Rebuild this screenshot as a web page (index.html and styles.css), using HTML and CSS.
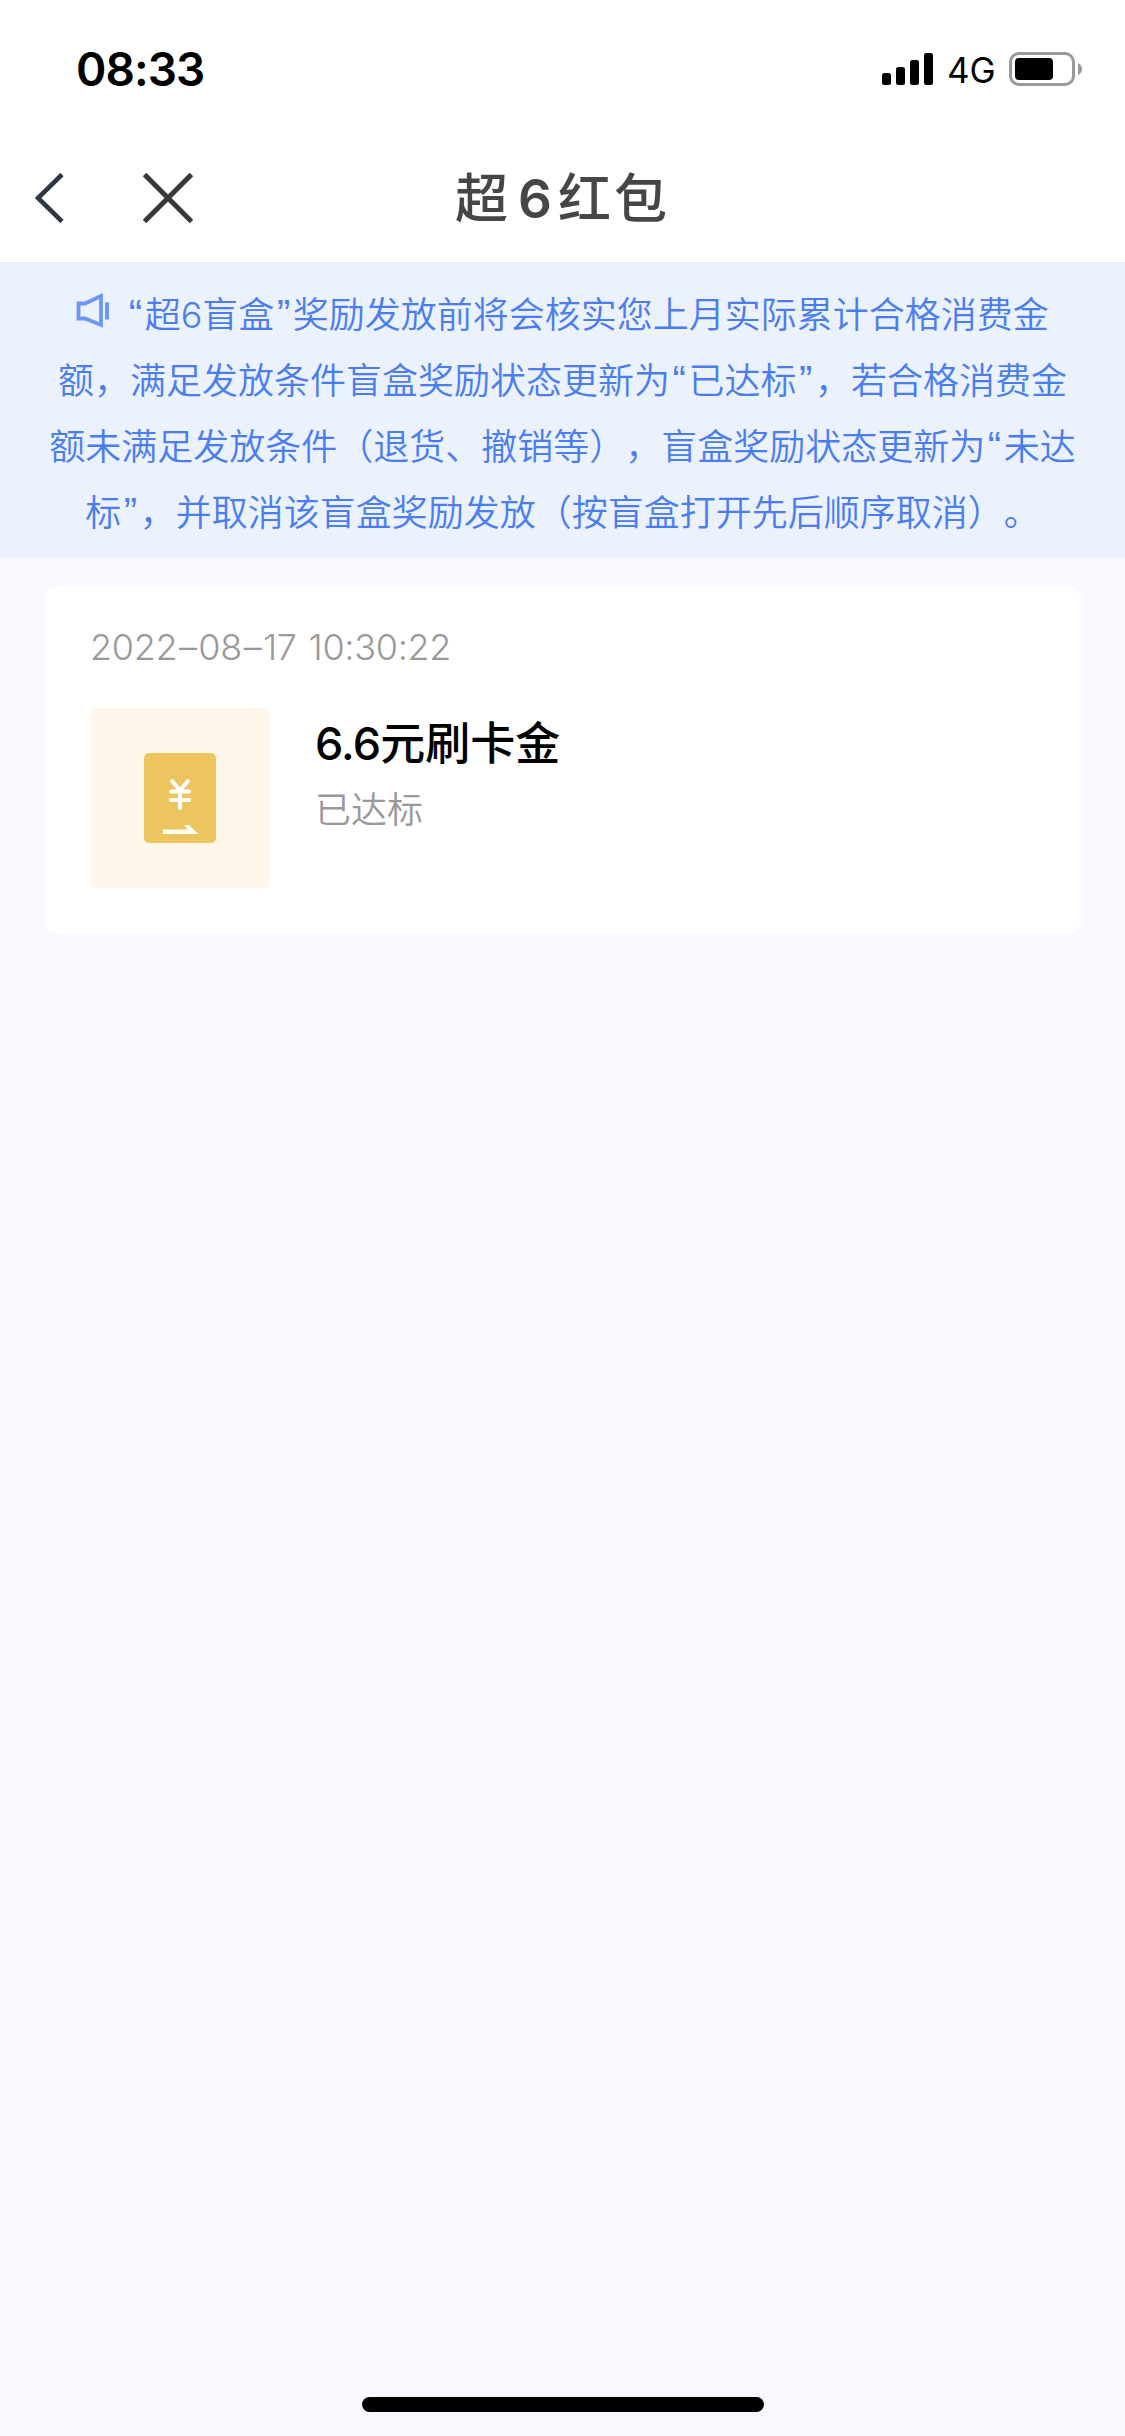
FILE: index.html
```html
<!DOCTYPE html>
<html lang="zh-CN">
<head>
<meta charset="utf-8">
<title>超6红包</title>
<link rel="stylesheet" href="styles.css">
</head>
<body>
<div class="screen">
  <header class="header">
    <div class="status">
      <span class="time">08:33</span>
      <div class="indicators">
        <svg class="signal" width="51" height="32" viewBox="0 0 51 32"><rect x="0" y="20" width="9" height="12" rx="2.5"/><rect x="14" y="14" width="9" height="18" rx="2.5"/><rect x="28" y="7" width="9" height="25" rx="2.5"/><rect x="42" y="0" width="9" height="32" rx="2.5"/></svg>
        <span class="network">4G</span>
        <svg class="battery" width="73" height="34" viewBox="0 0 73 34"><rect x="1.5" y="1.5" width="63" height="31" rx="8.5" fill="none" stroke="#999" stroke-width="3"/><rect x="6" y="6" width="38" height="22" rx="4"/><path d="M69 11q4 2 4 6t-4 6z" fill="#999"/></svg>
      </div>
    </div>
    <nav class="nav">
      <div class="nav-actions">
        <svg class="back" width="30" height="50" viewBox="0 0 30 50"><path d="M27 1.500L3 25L27 48.500" fill="none" stroke="#2f3744" stroke-width="4.600"/></svg>
        <svg class="close" width="50" height="50" viewBox="0 0 50 50"><path d="M1.500 1.500L48.500 48.500M48.500 1.500L1.500 48.500" fill="none" stroke="#383838" stroke-width="5"/></svg>
      </div>
      <h1 class="nav-title">超<span class="digit">6</span>红包</h1>
    </nav>
  </header>
  <section class="notice">
    <p class="line"><svg class="horn" width="34" height="36" viewBox="0 0 34 36"><path d="M2.500 10.500h6.500L25 3v29L9 25.500H2.500z" fill="none" stroke="#6d97f4" stroke-width="3.800"/><path d="M31 9.500v17" stroke="#6d97f4" stroke-width="4"/></svg><span><span class="q">“</span>超6盲盒<span class="q">”</span>奖励发放前将会核实您上月实际累计合格消费金</span></p>
    <p class="line"><span>额，满足发放条件盲盒奖励状态更新为<span class="q">“</span>已达标<span class="q">”</span>，若合格消费金</span></p>
    <p class="line"><span>额未满足发放条件（退货、撤销等），盲盒奖励状态更新为<span class="q">“</span>未达</span></p>
    <p class="line"><span>标<span class="q">”</span>，并取消该盲盒奖励发放（按盲盒打开先后顺序取消）。</span></p>
  </section>
  <main class="list">
    <article class="card">
      <time class="date">2022<span class="dash">–</span>08<span class="dash">–</span>17 10:30:22</time>
      <div class="prize">
        <div class="thumb">
          <svg width="72" height="90" viewBox="0 0 72 90"><rect width="72" height="90" rx="5" fill="#edc55f"/><path d="M28 28l8 9.500l8-9.500M36 38v17M27 38.500h18M27 47h18" fill="none" stroke="#fff" stroke-width="4" stroke-linecap="round" stroke-linejoin="round"/><path d="M19 76.500h25l-4-4.500h5L54 81H19z" fill="#fff"/></svg>
        </div>
        <div class="info">
          <h2 class="name"><span class="amount">6.6</span>元刷卡金</h2>
          <p class="state">已达标</p>
        </div>
      </div>
    </article>
  </main>
  <footer class="home"><div class="home-bar"></div></footer>
</div>
</body>
</html>
```
FILE: styles.css
```css
* { box-sizing: border-box; margin: 0; padding: 0; }
body {
  font-family: Inter, "Noto Sans CJK SC", sans-serif;
  text-spacing-trim: space-all;
  background: #f8f9fe;
}
svg { display: block; flex: none; }
.screen { width: 1125px; height: 2436px; display: flex; flex-direction: column; }
.header { height: 263px; background: #fff; border-bottom: 1px solid #ececee; }
.status { height: 138px; padding: 0 43px 0 76px; display: flex; align-items: center; justify-content: space-between; color: #000; }
.time { font-size: 46px; font-weight: 600; line-height: 60px; letter-spacing: -0.9px; }
.indicators { display: flex; align-items: center; }
.network { margin-left: 14px; width: 62px; font-size: 35px; line-height: 40px; padding-top: 2px; }
.nav { height: 120px; display: grid; grid-template-columns: 1fr auto 1fr; align-items: center; }
.nav-actions { display: flex; gap: 78px; padding-left: 35px; }
.nav-title { font-size: 53px; font-weight: 500; line-height: 80px; color: #464646; letter-spacing: 3px; padding-top: 1px; }
.digit { margin: 0 3px 0 7px; font-weight: 600; }
.notice { height: 295px; padding-top: 19px; background: #ebf1fd; color: #4a7df0; }
.line { height: 66px; display: flex; justify-content: center; align-items: center; font-size: 36px; font-weight: 350; line-height: 66px; white-space: nowrap; }
.q { display: inline-block; width: 18.5px; text-align: center; font-family: "Liberation Sans", sans-serif; font-size: 40px; line-height: 1; }
.horn { margin-right: 16px; position: relative; top: -4px; }
.list { flex: 1; padding: 29px 45px 0; }
.card { height: 346px; padding: 38px 45px 0; border-radius: 10px; background: #fff; }
.date { display: block; font-size: 36px; font-weight: 350; line-height: 44px; color: #999; letter-spacing: -0.3px; word-spacing: 2px; }
.dash { display: inline-block; width: 21px; text-align: center; }
.prize { margin-top: 39px; display: flex; gap: 45px; }
.thumb { width: 180px; height: 180px; border-radius: 5px; background: #fff8ea; display: flex; align-items: center; justify-content: center; }
.name { font-size: 45px; font-weight: 500; line-height: 66px; margin-top: 3px; color: #000; }
.amount { letter-spacing: -0.8px; }
.state { font-size: 36px; font-weight: 350; line-height: 66px; color: #999; }
.home { height: 39px; display: flex; justify-content: center; }
.home-bar { width: 402px; height: 15px; border-radius: 8px; background: #000; }
```
